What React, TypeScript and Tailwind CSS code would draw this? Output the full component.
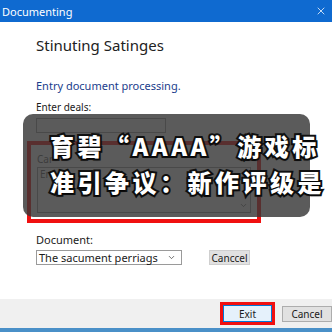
import { X, ChevronDown } from "lucide-react";

const App = () => {
  return (
    <div className="relative w-[332px] h-[332px] overflow-hidden bg-white font-['Noto_Sans',sans-serif] text-[#1a1a1a]">
      {/* title bar */}
      <div className="flex items-center justify-between h-[22px] bg-[#0f6ad0] pl-[2px] pr-[5px] text-white">
        <span className="text-[11px] leading-none">Documenting</span>
        <X className="w-[12px] h-[12px]" strokeWidth={1.5} />
      </div>

      <div className="flex flex-col h-[277px] px-[36px]">
        <h1 className="mt-[13px] text-[15px] leading-[20px] text-[#222]">Stinuting Satinges</h1>
        <p className="mt-[24px] text-[11px] leading-[14px] text-[#1b3d8c]">Entry document processing.</p>
        <p className="mt-[7px] text-[10px] leading-[14px]">Enter deals:</p>
        <div className="mt-[4px] w-[130px] h-[15px] border border-[#9a9a9a]" />

        {/* highlighted group */}
        <div className="mt-[8px] -mx-[9px] w-[234px] h-[82px] border-[4px] border-[#f01010] px-[6px] pt-[8px]">
          <p className="text-[10px] leading-[12px] text-[#555]">Car</p>
          <div className="mt-[2px] h-[46px] border border-[#9a9a9a] flex flex-col justify-between px-[2px]">
            <span className="text-[10px] leading-[12px] text-[#555]">Enl</span>
            <ChevronDown className="self-end w-[9px] h-[9px] mb-[2px] text-[#555]" />
          </div>
        </div>

        <p className="mt-[10px] text-[11px] leading-[14px]">Document:</p>
        <div className="mt-[3px] flex items-center">
          <div className="w-[146px] h-[15px] border border-[#9a9a9a] flex items-center justify-between pl-[2px] pr-[5px]">
            <span className="text-[11px] leading-none">The sacument perriags</span>
            <ChevronDown className="w-[9px] h-[9px] text-[#444]" />
          </div>
          <div className="ml-[27px] w-[41px] h-[15px] bg-[#e1e1e1] border border-[#cfcfcf] flex items-center justify-center text-[10px] leading-none">
            Canccel
          </div>
        </div>
      </div>

      {/* footer */}
      <div className="flex items-center justify-end h-[29px] bg-[#f0f0f0] gap-[7px]">
        <div className="border-[3px] border-[#f01010]">
          <div className="w-[49px] h-[17px] bg-[#e5f1fb] border border-[#0078d7] flex items-center justify-center text-[10px] leading-none">
            Exit
          </div>
        </div>
        <div className="w-[50px] h-[16px] bg-[#e1e1e1] border border-[#adadad] flex items-center justify-center text-[10px] leading-none">
          Cancel
        </div>
      </div>
      <div className="h-[4px] bg-[#4a90c8]" />

      {/* caption overlay */}
      <div className="absolute left-[23px] top-[114px] w-[287px] h-[103px] rounded-[10px] bg-[rgba(55,55,55,0.82)]" />
      <div className="absolute left-[50px] top-[128px] font-['Noto_Sans_CJK_SC',sans-serif] font-black text-white text-[24px] leading-[36px] tracking-[3.5px] whitespace-nowrap [-webkit-text-stroke:4px_#111] [paint-order:stroke_fill] [text-shadow:0_1px_2px_#000]">
        <div>育碧“AAAA”游戏标</div>
        <div>准引争议：新作评级是</div>
      </div>
    </div>
  );
};

export default App;
